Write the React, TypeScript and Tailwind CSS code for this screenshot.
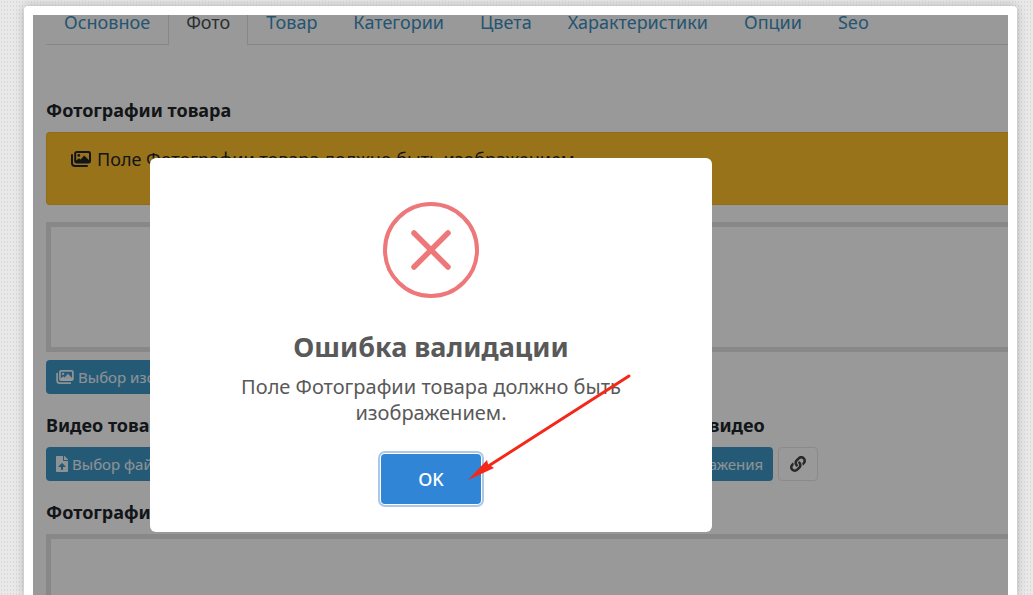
import React from "react";
import { FaFileUpload, FaLink } from "react-icons/fa";

const tabs = ["Основное", "Фото", "Товар", "Категории", "Цвета", "Характеристики", "Опции", "Seo"];

const blueButton = "flex h-[34px] items-center gap-1 whitespace-nowrap rounded bg-[#3f96c6] px-[10px] text-[15px] leading-5 text-white/90";

function ImagesIcon({ className }: { className: string }) {
  return (
    <svg viewBox="0 0 20 16" className={className} fill="none" stroke="currentColor" strokeWidth="2" aria-hidden="true">
      <path d="M1 4V12A3 3 0 0 0 4 15H16" strokeLinecap="round" />
      <rect x="4.2" y="1" width="14.8" height="10.6" rx="1.4" />
      <g fill="currentColor" stroke="none">
        <circle cx="7.8" cy="4.4" r="1.4" />
        <path d="M5 12V9.6L8 7.2L9.6 8.6L13.2 4.4L18.4 9.4V12Z" />
      </g>
    </svg>
  );
}

function Tabs() {
  return (
    <nav className="flex h-[30px] items-stretch text-lg">
      {tabs.map((tab) => (
        <a
          key={tab}
          href="#"
          className={
            tab === "Фото"
              ? "flex items-end border-x border-[#dee2e6] px-[17px] pb-[15px] leading-4 text-[#495057]"
              : "flex items-end border-b border-[#dee2e6] px-[18px] pb-[14px] leading-4 text-[#3c8dbc]"
          }
        >
          {tab}
        </a>
      ))}
      <span className="flex-1 border-b border-[#dee2e6]" />
    </nav>
  );
}

function ProductForm() {
  return (
    <section className="pl-[13px] text-lg leading-6 text-[#212529]">
      <Tabs />
      <h2 className="mt-[53px] font-bold">Фотографии товара</h2>
      <div className="mt-2.5 h-[73px] overflow-hidden rounded-l border border-r-0 border-[#f0b41e] bg-[#ffc02a] px-6 pt-[14px]">
        <p className="flex items-center gap-1.5 whitespace-nowrap">
          <ImagesIcon className="h-4 w-5" />
          Поле Фотографии товара должно быть изображением.
        </p>
      </div>
      <div className="mt-[17px] h-[130px] border-[5px] border-r-0 border-[#e3e3e3]" />
      <div className="mt-2 flex">
        <button className={blueButton}>
          <ImagesIcon className="h-[14px] w-[18px]" />
          Выбор изображения
        </button>
      </div>
      <div className="mt-[19px] grid grid-cols-2">
        <div>
          <h2 className="font-bold">Видео товара</h2>
          <button className={`mt-2.5 ${blueButton}`}>
            <FaFileUpload className="h-4 w-3" />
            Выбор файла
          </button>
        </div>
        <div className="pl-[54px]">
          <h2 className="whitespace-nowrap font-bold">Обложка для видео</h2>
          <div className="mt-2.5 flex gap-[5px]">
            <button className={blueButton}>
              <ImagesIcon className="h-[14px] w-[18px]" />
              Выбор изображения
            </button>
            <button aria-label="Ссылка" className="flex h-[34px] w-10 items-center justify-center rounded border border-[#e6e6e6] text-[#444]">
              <FaLink className="size-4" />
            </button>
          </div>
        </div>
      </div>
      <h2 className="mt-[19px] font-bold">Фотографии для галереи</h2>
      <div className="mt-2.5 h-[130px] border-[5px] border-r-0 border-[#e3e3e3]" />
    </section>
  );
}

function ErrorDialog() {
  return (
    <div role="alertdialog" aria-labelledby="dialog-title" className="relative flex w-[562px] flex-col items-center rounded-md bg-white px-8 pb-7 pt-11 text-[#595959]">
      <svg viewBox="0 0 96 96" className="size-24" fill="none" stroke="#ee7779" strokeLinecap="round">
        <circle cx="48" cy="48" r="46" strokeWidth="4" />
        <path d="M31 31L65 65M65 31L31 65" strokeWidth="5.5" />
      </svg>
      <h1 id="dialog-title" className="mt-[31px] text-[27px] font-bold leading-9">Ошибка валидации</h1>
      <p className="mt-[9px] w-[420px] text-center text-xl leading-[26px]">Поле Фотографии товара должно быть изображением.</p>
      <button className="mt-7 h-[50px] w-[100px] rounded bg-[#3085d6] text-lg font-medium text-white shadow-[0_0_0_1px_#fff,0_0_0_3px_#abc9e6]">OK</button>
      <svg viewBox="0 0 164 108" className="pointer-events-none absolute left-[318px] top-[216px] h-[108px] w-[164px]" aria-hidden="true">
        <path d="M161 2L22 91" stroke="#f52718" strokeWidth="3" strokeLinecap="round" />
        <path d="M0 106L19 86L20 90L26 94Z" fill="#f52718" />
      </svg>
    </div>
  );
}

export default function App() {
  return (
    <div className="h-screen overflow-hidden bg-[#e9e9e9] bg-[radial-gradient(#dadada_1px,transparent_1px)] bg-[size:3px_4px] pl-6 pr-4 pt-1.5 font-['Noto_Sans',sans-serif]">
      <div className="h-full rounded-t bg-white px-[9px] pt-[9px] shadow-[0_0_10px_rgba(0,0,0,0.25)]">
        <main className="relative h-full overflow-hidden bg-white">
          <ProductForm />
          <div className="absolute inset-0 flex items-start bg-black/40 pl-[117px] pt-[143px]">
            <ErrorDialog />
          </div>
        </main>
      </div>
    </div>
  );
}
